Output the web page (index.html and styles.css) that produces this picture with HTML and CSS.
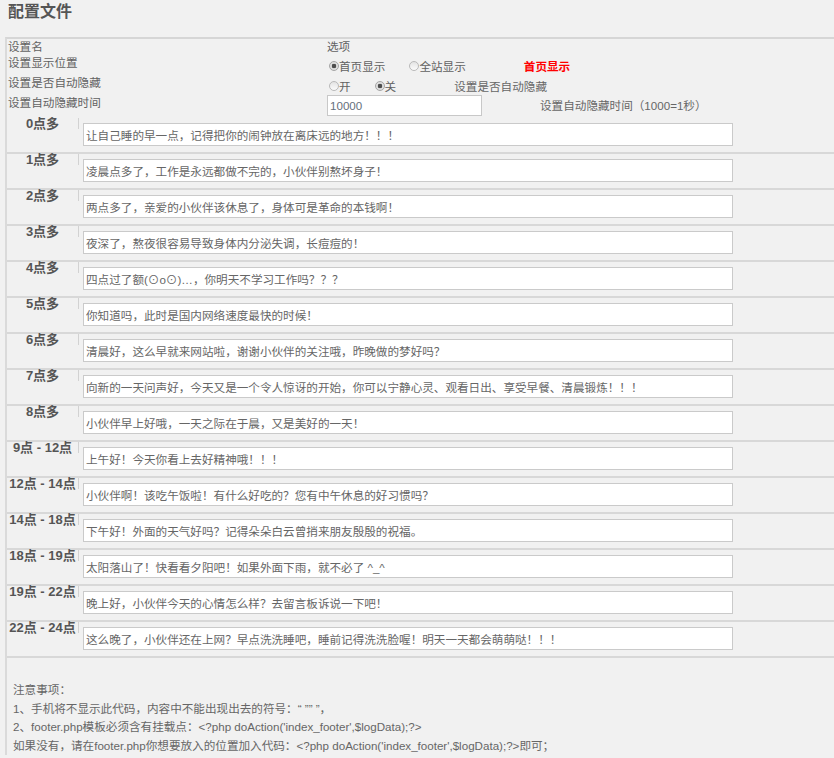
FILE: index.html
```html
<!DOCTYPE html>
<html lang="zh-CN">
<head>
    <meta charset="UTF-8">
    <meta name="viewport" content="width=device-width, initial-scale=1.0">
    <title>配置文件</title>
    <link rel="stylesheet" href="styles.css">
</head>
<body>
<h2 class="title">配置文件</h2>

<div class="conf">
    <!-- 基本设置 -->
    <div class="set-row head">
        <div class="set-name">设置名</div>
        <div class="set-val">选项</div>
    </div>
    <div class="set-row">
        <div class="set-name">设置显示位置</div>
        <div class="set-val pad">
            <label class="opt"><input type="radio" name="position" checked>首页显示</label>
            <label class="opt"><input type="radio" name="position">全站显示</label>
            <span class="desc current">首页显示</span>
        </div>
    </div>
    <div class="set-row">
        <div class="set-name">设置是否自动隐藏</div>
        <div class="set-val pad">
            <label class="opt"><input type="radio" name="autohide">开</label>
            <label class="opt"><input type="radio" name="autohide" checked>关</label>
            <span class="desc">设置是否自动隐藏</span>
        </div>
    </div>
    <div class="set-row last">
        <div class="set-name">设置自动隐藏时间</div>
        <div class="set-val">
            <input class="time-box" type="text" name="hidetime" value="10000">
            <span class="desc">设置自动隐藏时间（1000=1秒）</span>
        </div>
    </div>

    <!-- 各时间段提示语 -->
    <div class="times">
        <div class="time-row">
            <div class="time-label">0点多</div>
            <input class="msg" type="text" name="t0" value="让自己睡的早一点，记得把你的闹钟放在离床远的地方！！！">
        </div>
        <div class="time-row">
            <div class="time-label">1点多</div>
            <input class="msg" type="text" name="t1" value="凌晨点多了，工作是永远都做不完的，小伙伴别熬坏身子！">
        </div>
        <div class="time-row">
            <div class="time-label">2点多</div>
            <input class="msg" type="text" name="t2" value="两点多了，亲爱的小伙伴该休息了，身体可是革命的本钱啊！">
        </div>
        <div class="time-row">
            <div class="time-label">3点多</div>
            <input class="msg" type="text" name="t3" value="夜深了，熬夜很容易导致身体内分泌失调，长痘痘的！">
        </div>
        <div class="time-row">
            <div class="time-label">4点多</div>
            <input class="msg" type="text" name="t4" value="四点过了额(⊙o⊙)…，你明天不学习工作吗？？？">
        </div>
        <div class="time-row">
            <div class="time-label">5点多</div>
            <input class="msg" type="text" name="t5" value="你知道吗，此时是国内网络速度最快的时候！">
        </div>
        <div class="time-row">
            <div class="time-label">6点多</div>
            <input class="msg" type="text" name="t6" value="清晨好，这么早就来网站啦，谢谢小伙伴的关注哦，昨晚做的梦好吗？">
        </div>
        <div class="time-row">
            <div class="time-label">7点多</div>
            <input class="msg" type="text" name="t7" value="向新的一天问声好，今天又是一个令人惊讶的开始，你可以宁静心灵、观看日出、享受早餐、清晨锻炼！！！">
        </div>
        <div class="time-row">
            <div class="time-label">8点多</div>
            <input class="msg" type="text" name="t8" value="小伙伴早上好哦，一天之际在于晨，又是美好的一天！">
        </div>
        <div class="time-row">
            <div class="time-label">9点 - 12点</div>
            <input class="msg" type="text" name="t9" value="上午好！今天你看上去好精神哦！！！">
        </div>
        <div class="time-row">
            <div class="time-label">12点 - 14点</div>
            <input class="msg" type="text" name="t12" value="小伙伴啊！该吃午饭啦！有什么好吃的？您有中午休息的好习惯吗？">
        </div>
        <div class="time-row">
            <div class="time-label">14点 - 18点</div>
            <input class="msg" type="text" name="t14" value="下午好！外面的天气好吗？记得朵朵白云曾捎来朋友殷殷的祝福。">
        </div>
        <div class="time-row">
            <div class="time-label">18点 - 19点</div>
            <input class="msg" type="text" name="t18" value="太阳落山了！快看看夕阳吧！如果外面下雨，就不必了 ^_^">
        </div>
        <div class="time-row">
            <div class="time-label">19点 - 22点</div>
            <input class="msg" type="text" name="t19" value="晚上好，小伙伴今天的心情怎么样？去留言板诉说一下吧！">
        </div>
        <div class="time-row">
            <div class="time-label">22点 - 24点</div>
            <input class="msg" type="text" name="t22" value="这么晚了，小伙伴还在上网？早点洗洗睡吧，睡前记得洗洗脸喔！明天一天都会萌萌哒！！！">
        </div>
    </div>

    <!-- 注意事项 -->
    <div class="notes">
        <p>注意事项：</p>
        <p>1、手机将不显示此代码，内容中不能出现出去的符号：“ ”” ”，</p>
        <p>2、footer.php模板必须含有挂载点：&lt;?php doAction('index_footer',$logData);?&gt;</p>
        <p>如果没有，请在footer.php你想要放入的位置加入代码：&lt;?php doAction('index_footer',$logData);?&gt;即可；</p>
    </div>
</div>
</body>
</html>
```

FILE: styles.css
```css
* {
    margin: 0;
    padding: 0;
    box-sizing: border-box;
}

html {
    background: #f1f1f1;
}

body {
    font-family: "Liberation Sans", "Noto Sans CJK SC", sans-serif;
    font-size: 11.6px;
    color: #616161;
    background: #f1f1f1;
}

.title {
    height: 37px;
    padding: 1px 8px 0;
    font-size: 16px;
    line-height: 22px;
    font-weight: bold;
    color: #555;
}

.conf {
    margin-left: 5px;
    border-left: 2px solid #dadada;
    border-top: 2px solid #d6d6d6;
}

/* 基本设置 */
.set-row {
    display: grid;
    grid-template-columns: 319px 1fr;
    align-items: start;
    height: 20px;
    padding-left: 1px;
    line-height: 16px;
}

.set-row.head {
    height: 16px;
}

.set-row.last {
    height: 21px;
}

.set-val {
    display: flex;
    align-items: center;
    white-space: nowrap;
}

.set-val.pad {
    padding-top: 4px;
}

.opt {
    display: flex;
    align-items: center;
}

.opt + .opt {
    margin-left: 22px;
}

.opt input {
    appearance: none;
    width: 10px;
    height: 10px;
    margin: -2px 0 0 2px;
    border: 1px solid #b9b9b9;
    border-radius: 50%;
    background: linear-gradient(#e4e4e4, #fbfbfb);
}

.opt input:checked {
    border-color: #a5a5a5;
    background: radial-gradient(circle, #4d4d4d 0 2px, #dedede 2.6px);
}

.desc {
    margin-left: 58px;
    color: #666;
}

.desc.current {
    color: #ff0000;
    font-weight: bold;
}

.time-box {
    width: 155px;
    height: 21px;
    padding: 0 2px;
    border: 1px solid #c8c8c8;
    background: #fff;
    font: inherit;
    color: #66707c;
    outline: none;
}

/* 时间段提示语 */
.time-row {
    display: flex;
    align-items: flex-start;
    border-top: 2px solid #d8d8d8;
    padding-bottom: 6px;
}

.time-row:first-child {
    border-top-color: transparent;
}

.time-label {
    width: 72px;
    height: 11px;
    border-right: 1px solid #d2d2d2;
    margin-right: 4px;
    font-size: 13px;
    line-height: 12px;
    font-weight: bold;
    text-align: center;
    white-space: nowrap;
    color: #555;
}

.msg {
    width: 650px;
    height: 23px;
    margin-top: 5px;
    padding: 0 2px;
    border: 1px solid #cacaca;
    background: #fff;
    font: inherit;
    color: #666;
    outline: none;
}

/* 注意事项 */
.notes {
    border-top: 2px solid #d8d8d8;
    padding: 23px 0 0 6px;
    line-height: 18.5px;
    color: #666;
    white-space: nowrap;
}
```
